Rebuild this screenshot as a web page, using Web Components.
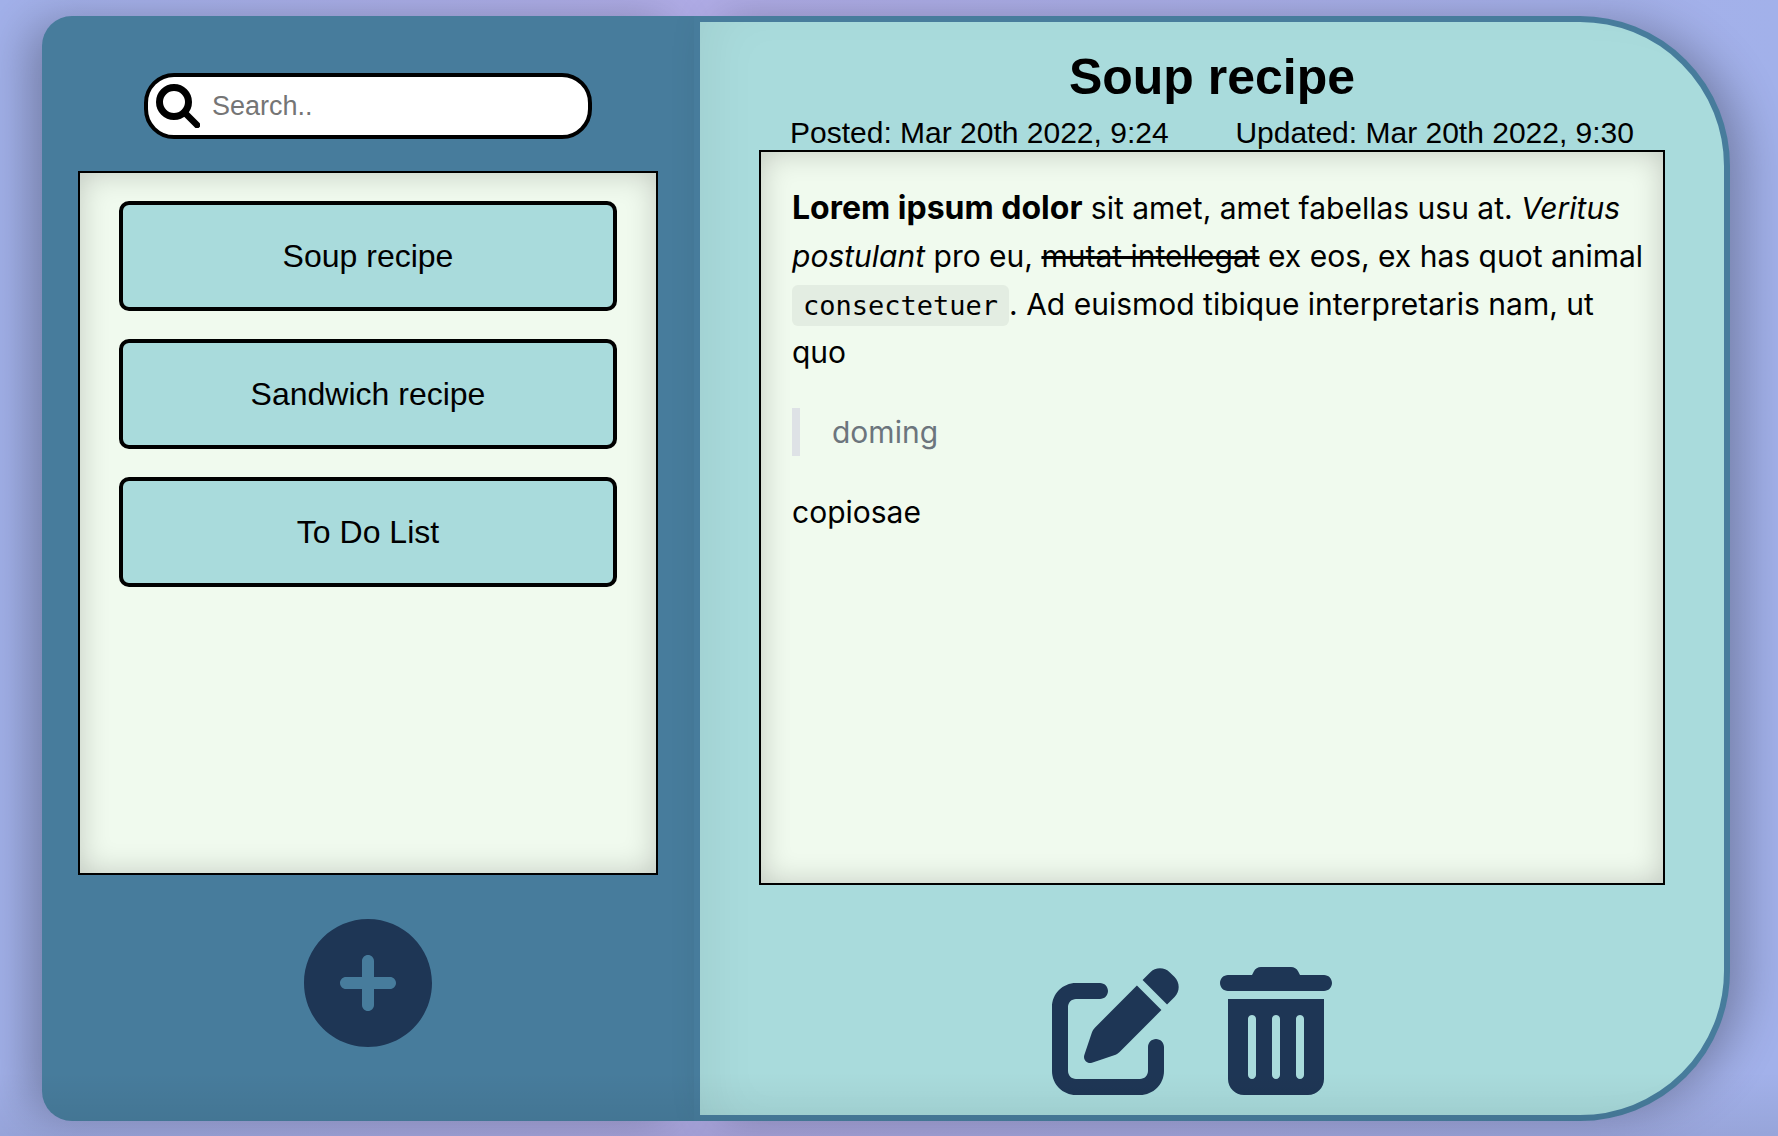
<!DOCTYPE html>
<html lang="en">
<head>
<meta charset="utf-8">
<title>Notes</title>
<style>
html,body{height:100%}
body{margin:0;background:linear-gradient(90deg,#a2b1ea 0%,#b0ace6 39%,#a2b1ea 100%);font-family:"Liberation Sans",Arial,sans-serif;color:#000}
</style>
</head>
<body>
<notes-app></notes-app>
<script>
const define = (name, html) => {
  const t = document.createElement('template');
  t.innerHTML = html;
  customElements.define(name, class extends HTMLElement {
    constructor() {
      super();
      this.attachShadow({ mode: 'open' }).append(t.content.cloneNode(true));
    }
  });
};

define('icon-button', `
<style>
:host{display:block}
button{display:block;border:0;padding:0;background:none;color:#1e3655;cursor:pointer}
::slotted(svg){display:block;height:128px;fill:currentColor}
</style>
<button type="button"><slot></slot></button>`);

define('search-box', `
<style>
:host{display:block;width:448px;max-width:80%}
label{box-sizing:border-box;display:flex;align-items:center;gap:12px;height:66px;padding:0 8px;border:4px solid #000;border-radius:30px;background:#fff}
svg{width:44px;height:44px;flex:none}
input{flex:1;min-width:0;border:0;outline:0;padding:0;background:none;font:27px/32px "Liberation Sans",Arial,sans-serif;color:#000}
input::placeholder{color:#757575}
</style>
<label>
<svg viewBox="0 0 44 44" fill="none" stroke="#000" stroke-linecap="round"><circle cx="18" cy="18" r="14.500" stroke-width="7"/><path d="M30 30l11 11" stroke-width="6.500"/></svg>
<input type="search" placeholder="Search.." aria-label="Search">
</label>`);

define('note-item', `
<style>
:host{display:block}
button{display:block;width:100%;height:110px;border:4px solid #000;border-radius:10px;background:#a9dbdc;font:32px/36px "Liberation Sans",Arial,sans-serif;color:#000;cursor:pointer}
</style>
<button type="button"><slot></slot></button>`);

define('notes-sidebar', `
<style>
:host{box-sizing:border-box;display:flex;flex-direction:column;align-items:center;padding:57px 36px 74px;background:#477c9c;border-radius:30px 0 0 30px;box-shadow:-20px 0 48px -8px rgba(0,0,0,.3)}
.list{box-sizing:border-box;align-self:stretch;flex:1;margin:32px 0 44px;padding:28px 39px;border:2px solid #000;background:#f0faee;box-shadow:inset 0 0 30px rgba(0,0,0,.2);display:flex;flex-direction:column;gap:28px}
</style>
<search-box></search-box>
<nav class="list" aria-label="Notes">
<note-item>Soup recipe</note-item>
<note-item>Sandwich recipe</note-item>
<note-item>To Do List</note-item>
</nav>
<icon-button><svg viewBox="0 0 512 512" role="img" aria-label="Add note"><path d="M256 512c141.400 0 256-114.600 256-256S397.400 0 256 0 0 114.600 0 256s114.600 256 256 256zm-24-168v-64h-64c-13.300 0-24-10.700-24-24s10.700-24 24-24h64v-64c0-13.300 10.700-24 24-24s24 10.700 24 24v64h64c13.300 0 24 10.700 24 24s-10.700 24-24 24h-64v64c0 13.300-10.700 24-24 24s-24-10.700-24-24z"/></svg></icon-button>`);

define('note-body', `
<style>
:host{box-sizing:border-box;display:block;padding:32px 8px 32px 31px;border:2px solid #000;background:#f0faee;box-shadow:inset 0 0 30px rgba(0,0,0,.2);font:30px/48px Inter,sans-serif}
p{margin:0 0 32px}
strong{font-size:32px;line-height:1}
blockquote{margin:0 0 32px;padding-left:32px;border-left:8px solid #dee2e6;color:#6c757d}
code{padding:5px 11px;border-radius:6px;background:rgba(33,37,41,.06);font:27px/36px "DejaVu Sans Mono",monospace}
</style>
<p><strong>Lorem ipsum dolor</strong> sit amet, amet fabellas usu at. <em>Veritus</em> <em>postulant</em> pro eu, <s>mutat intellegat</s> ex eos, ex has quot animal <code>consectetuer</code>. Ad euismod tibique interpretaris nam, ut quo</p>
<blockquote>doming</blockquote>
<p>copiosae</p>`);

define('note-view', `
<style>
:host{box-sizing:border-box;display:flex;flex-direction:column;padding:26px 59px 20px;border:6px solid #477c9c;border-radius:0 150px 150px 0;background:#a9dbdc;box-shadow:20px 0 48px -8px rgba(0,0,0,.3),inset 30px 0 60px -30px rgba(0,0,0,.08)}
h1{margin:0;text-align:center;font-size:50px;line-height:58px}
.dates{display:flex;justify-content:space-between;padding:10px 31px 0;font-size:30px;line-height:34px}
note-body{flex:1;margin-bottom:82px}
.tools{display:flex;justify-content:center;gap:40px;padding-right:40px}
</style>
<h1>Soup recipe</h1>
<div class="dates"><span>Posted: Mar 20th 2022, 9:24</span><span>Updated: Mar 20th 2022, 9:30</span></div>
<note-body></note-body>
<div class="tools">
<icon-button><svg viewBox="0 0 512 512" role="img" aria-label="Edit"><path d="M471.600 21.700c-21.900-21.900-57.300-21.900-79.200 0L362.300 51.700l97.900 97.900 30.100-30.100c21.900-21.900 21.900-57.300 0-79.200L471.600 21.700zm-299.200 220c-6.100 6.100-10.800 13.600-13.500 21.900l-29.600 88.800c-2.900 8.600-.6 18.100 5.800 24.600s15.900 8.700 24.600 5.800l88.800-29.600c8.200-2.700 15.700-7.400 21.900-13.500L437.700 172.300 339.700 74.300 172.400 241.700zM96 64C43 64 0 107 0 160V416c0 53 43 96 96 96H352c53 0 96-43 96-96V320c0-17.700-14.300-32-32-32s-32 14.300-32 32v96c0 17.700-14.300 32-32 32H96c-17.700 0-32-14.300-32-32V160c0-17.700 14.300-32 32-32h96c17.700 0 32-14.300 32-32s-14.300-32-32-32H96z"/></svg></icon-button>
<icon-button><svg viewBox="0 0 448 512" role="img" aria-label="Delete"><path d="M135.200 17.700C140.600 6.800 151.700 0 163.800 0H284.200c12.100 0 23.200 6.800 28.600 17.700L320 32h96c17.700 0 32 14.300 32 32s-14.300 32-32 32H32C14.300 96 0 81.700 0 64S14.300 32 32 32h96l7.200-14.300zM32 128H416V448c0 35.300-28.700 64-64 64H96c-35.300 0-64-28.700-64-64V128zm96 64c-8.800 0-16 7.200-16 16V432c0 8.800 7.200 16 16 16s16-7.200 16-16V208c0-8.800-7.200-16-16-16zm96 0c-8.800 0-16 7.200-16 16V432c0 8.800 7.200 16 16 16s16-7.200 16-16V208c0-8.800-7.200-16-16-16zm96 0c-8.800 0-16 7.200-16 16V432c0 8.800 7.200 16 16 16s16-7.200 16-16V208c0-8.800-7.200-16-16-16z"/></svg></icon-button>
</div>`);

define('notes-app', `
<style>
:host{box-sizing:border-box;position:relative;display:grid;grid-template-columns:652fr 1036fr;height:100vh;padding:16px 48px 15px 42px}
:host::after{content:"";position:absolute;inset:auto 0 0;height:64px;background:linear-gradient(transparent,rgba(0,0,0,.07));pointer-events:none}
</style>
<notes-sidebar></notes-sidebar>
<note-view></note-view>`);
</script>
</body>
</html>
